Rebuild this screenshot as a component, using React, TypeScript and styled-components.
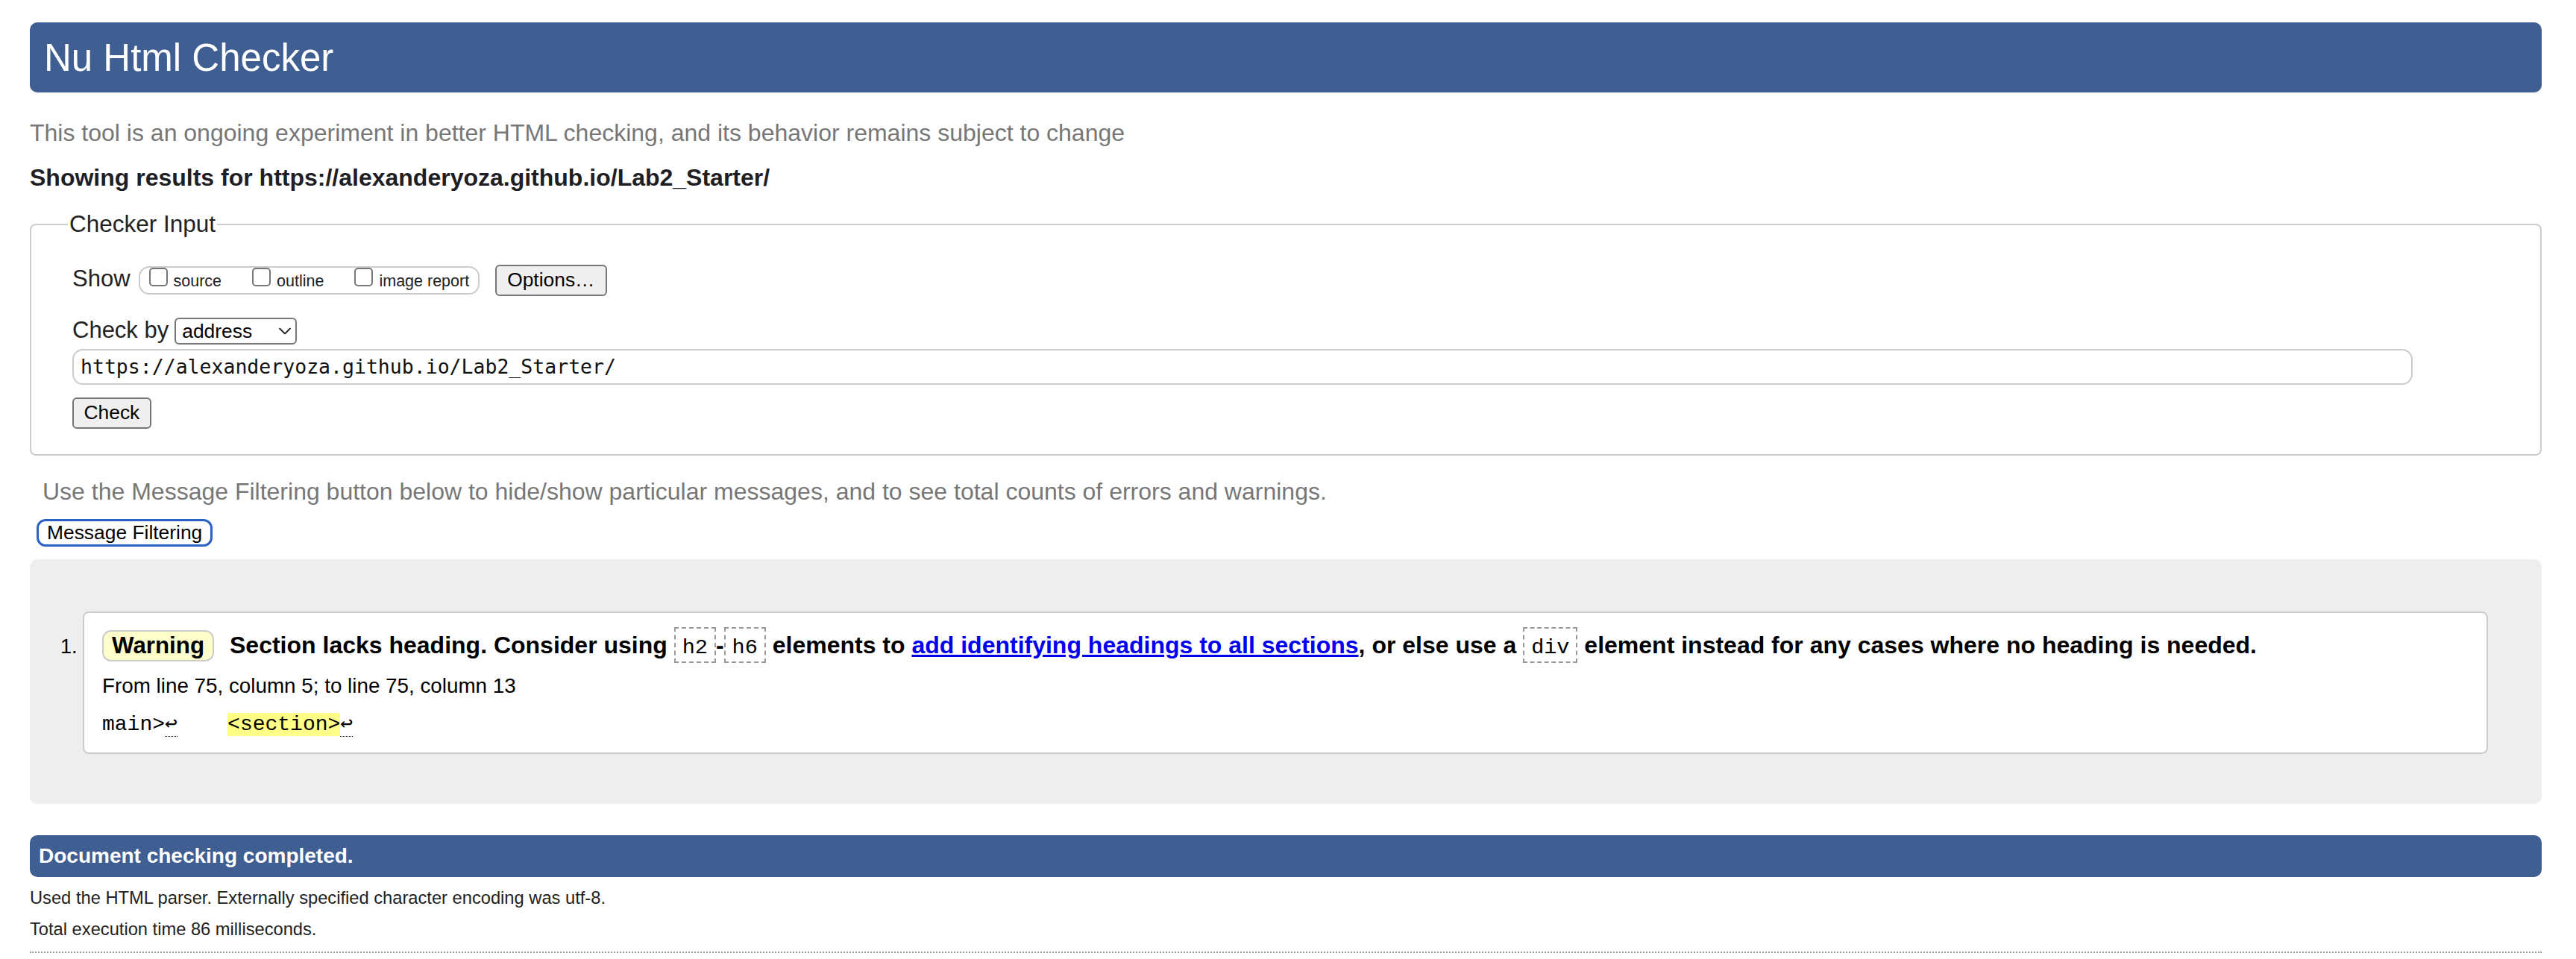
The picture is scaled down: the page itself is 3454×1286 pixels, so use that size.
import React from "react";
import styled, { createGlobalStyle } from "styled-components";

const GlobalStyle = createGlobalStyle`
  html, body { margin: 0; padding: 0; background: #fff; }
  body {
    font-family: "Liberation Sans", Arial, Helvetica, sans-serif;
    color: #222;
  }
  *, *::before, *::after { box-sizing: border-box; }
`;

const Page = styled.div`
  padding: 30px 46px 40px 40px;
`;

const Title = styled.h1`
  margin: 0;
  height: 94px;
  padding: 19px 19px 0;
  background: #3f5e92;
  color: #fff;
  font-size: 51px;
  font-weight: 400;
  line-height: 58.6px;
  border-radius: 10px;
`;

const Intro = styled.p`
  margin: 37.2px 0 0;
  font-size: 32px;
  line-height: 35.4px;
  color: #777;
`;

const ResultsFor = styled.p`
  margin: 24.6px 0 0;
  font-size: 32px;
  line-height: 35.4px;
  font-weight: 700;
  color: #1e1e24;
`;

const InputFieldset = styled.fieldset`
  margin: 26.6px 0 0;
  padding: 36px 55px 34px;
  min-width: 0;
  border: 2px solid #ccc;
  border-radius: 8px;
`;

const Legend = styled.legend`
  margin-left: -6px;
  padding: 0 2px;
  font-size: 31.5px;
  line-height: 35.4px;
  color: #222;
`;

const FormRow = styled.div<{ $top?: number }>`
  display: flex;
  align-items: baseline;
  margin-top: ${(p) => p.$top ?? 0}px;
`;

const FieldLabel = styled.span`
  font-size: 31px;
  line-height: 35.4px;
  color: #222;
`;

const CheckGroup = styled.span`
  display: inline-flex;
  align-items: baseline;
  gap: 41px;
  height: 38px;
  margin-left: 11px;
  padding: 0 12px;
  border: 2px solid #ccc;
  border-radius: 14px;
`;

const CheckItem = styled.label`
  display: inline-flex;
  align-items: baseline;
  font-size: 21.5px;
  line-height: 24.7px;
  color: #222;
`;

const CheckBox = styled.input`
  appearance: none;
  -webkit-appearance: none;
  width: 25px;
  height: 25px;
  margin: 0 8px 0 0;
  background: #fff;
  border: 2px solid #777;
  border-radius: 5px;
`;

const PlainButton = styled.button<{ $left?: number }>`
  height: 42px;
  margin-left: ${(p) => p.$left ?? 0}px;
  padding: 0 14px;
  font-family: inherit;
  font-size: 26.4px;
  line-height: 30.4px;
  color: #000;
  background: #efefef;
  border: 2px solid #767676;
  border-radius: 6px;
`;

const CheckButton = styled(PlainButton)`
  display: block;
  margin-top: 17px;
  padding: 0 13.5px;
`;

const SelectWrap = styled.span`
  position: relative;
  display: inline-flex;
  margin-left: 8px;
`;

const Select = styled.select`
  appearance: none;
  -webkit-appearance: none;
  width: 164px;
  height: 36px;
  padding: 0 36px 0 8px;
  font-family: inherit;
  font-size: 26.4px;
  color: #000;
  background: #fff;
  border: 2px solid #767676;
  border-radius: 6px;
`;

const Chevron = styled.svg`
  position: absolute;
  right: 8px;
  top: 50%;
  width: 16px;
  height: 9px;
  transform: translateY(-50%);
  pointer-events: none;
`;

const UrlInput = styled.input`
  display: block;
  width: 3138px;
  height: 48px;
  margin-top: 6px;
  padding: 0 9px;
  font-family: "DejaVu Sans Mono", "Liberation Mono", monospace;
  font-size: 26.5px;
  color: #111;
  background: #fff;
  border: 2px solid #ccc;
  border-radius: 14px;
`;

const FilterHint = styled.p`
  margin: 31.2px 0 0;
  padding-left: 17px;
  font-size: 32px;
  line-height: 35.4px;
  color: #777;
`;

const FilterButton = styled.button`
  display: block;
  height: 37px;
  margin: 19px 0 0 9px;
  padding: 0 11px;
  font-family: inherit;
  font-size: 26.4px;
  line-height: 31px;
  color: #000;
  background: #fff;
  border: 3px solid #2a62c6;
  border-radius: 12px;
`;

const Results = styled.div`
  margin-top: 17px;
  padding: 70px 72px 67px 71px;
  background: #eee;
  border-radius: 10px;
`;

const MessageList = styled.ol`
  margin: 0;
  padding: 0;
  font-size: 27px;
  color: #000;
`;

const MessageItem = styled.li`
  padding: 18.5px 24px 20.5px;
  background: #fff;
  border: 2px solid #ccc;
  border-radius: 8px;
`;

const MessageText = styled.p`
  margin: 0;
  font-size: 32px;
  line-height: 35.4px;
  font-weight: 700;
  color: #000;
`;

const Badge = styled.strong`
  display: inline-block;
  height: 42px;
  margin-right: 21px;
  padding: 2px 11px;
  font-size: 31.3px;
  line-height: 34px;
  background: #ffffcc;
  border: 2px solid #ccc;
  border-radius: 12px;
`;

const Code = styled.code`
  display: inline-block;
  height: 48px;
  padding: 8px 9px 0;
  font-family: "Liberation Mono", "Courier New", monospace;
  font-size: 28.5px;
  font-weight: 400;
  line-height: 36px;
  border: 2px dashed #999;
`;

const DocLink = styled.a`
  color: #0000ee;
  text-decoration: underline;
`;

const Location = styled.p`
  margin: 15.4px 0 0;
  font-size: 27.8px;
  line-height: 32px;
  color: #000;
`;

const Extract = styled.p`
  margin: 20.1px 0 0;
  font-family: "Liberation Mono", "Courier New", monospace;
  font-size: 28px;
  line-height: 32px;
  white-space: pre;
  color: #000;
`;

const Highlight = styled.mark`
  background: #ffff88;
  color: inherit;
`;

const LineFeed = styled.b`
  font-weight: 400;
  border-bottom: 1px dotted #000;
`;

const Completed = styled.h2`
  margin: 42px 0 0;
  height: 56px;
  padding: 13px 12px 0;
  background: #3f5e92;
  color: #fff;
  font-size: 28px;
  font-weight: 700;
  line-height: 30px;
  border-radius: 10px;
`;

const Note = styled.p<{ $top: number }>`
  margin: ${(p) => p.$top}px 0 0;
  font-size: 23.7px;
  line-height: 27px;
  color: #222;
`;

const Footer = styled.footer`
  margin-top: 15.6px;
  border-top: 2px dotted #999;
  height: 20px;
`;

export default function App() {
  return (
    <>
      <GlobalStyle />
      <Page>
        <Title>Nu Html Checker</Title>
        <Intro>
          This tool is an ongoing experiment in better HTML checking, and its behavior remains subject to change
        </Intro>
        <ResultsFor>Showing results for https://alexanderyoza.github.io/Lab2_Starter/</ResultsFor>

        <InputFieldset>
          <Legend>Checker Input</Legend>
          <FormRow>
            <FieldLabel>Show</FieldLabel>
            <CheckGroup>
              <CheckItem>
                <CheckBox type="checkbox" />
                source
              </CheckItem>
              <CheckItem>
                <CheckBox type="checkbox" />
                outline
              </CheckItem>
              <CheckItem>
                <CheckBox type="checkbox" />
                image report
              </CheckItem>
            </CheckGroup>
            <PlainButton type="button" $left={21}>
              Options…
            </PlainButton>
          </FormRow>
          <FormRow $top={28}>
            <FieldLabel>Check by</FieldLabel>
            <SelectWrap>
              <Select defaultValue="address">
                <option value="address">address</option>
                <option value="file">file upload</option>
                <option value="text">text input</option>
              </Select>
              <Chevron viewBox="0 0 16 9" fill="none">
                <path d="M1 1l7 7 7-7" stroke="#222" strokeWidth="1.8" strokeLinecap="round" strokeLinejoin="round" />
              </Chevron>
            </SelectWrap>
          </FormRow>
          <UrlInput type="url" defaultValue="https://alexanderyoza.github.io/Lab2_Starter/" />
          <CheckButton type="button">Check</CheckButton>
        </InputFieldset>

        <FilterHint>
          Use the Message Filtering button below to hide/show particular messages, and to see total counts of errors and warnings.
        </FilterHint>
        <FilterButton type="button">Message Filtering</FilterButton>

        <Results>
          <MessageList>
            <MessageItem>
              <MessageText>
                <Badge>Warning</Badge>
                Section lacks heading. Consider using <Code>h2</Code>-<Code>h6</Code> elements to{" "}
                <DocLink href="#">add identifying headings to all sections</DocLink>, or else use a <Code>div</Code>{" "}
                element instead for any cases where no heading is needed.
              </MessageText>
              <Location>From line 75, column 5; to line 75, column 13</Location>
              <Extract>
                main&gt;<LineFeed>↩</LineFeed>
                {"    "}
                <Highlight>&lt;section&gt;</Highlight>
                <LineFeed>↩</LineFeed>
              </Extract>
            </MessageItem>
          </MessageList>
        </Results>

        <Completed>Document checking completed.</Completed>
        <Note $top={15.4}>Used the HTML parser. Externally specified character encoding was utf-8.</Note>
        <Note $top={15}>Total execution time 86 milliseconds.</Note>
        <Footer />
      </Page>
    </>
  );
}
